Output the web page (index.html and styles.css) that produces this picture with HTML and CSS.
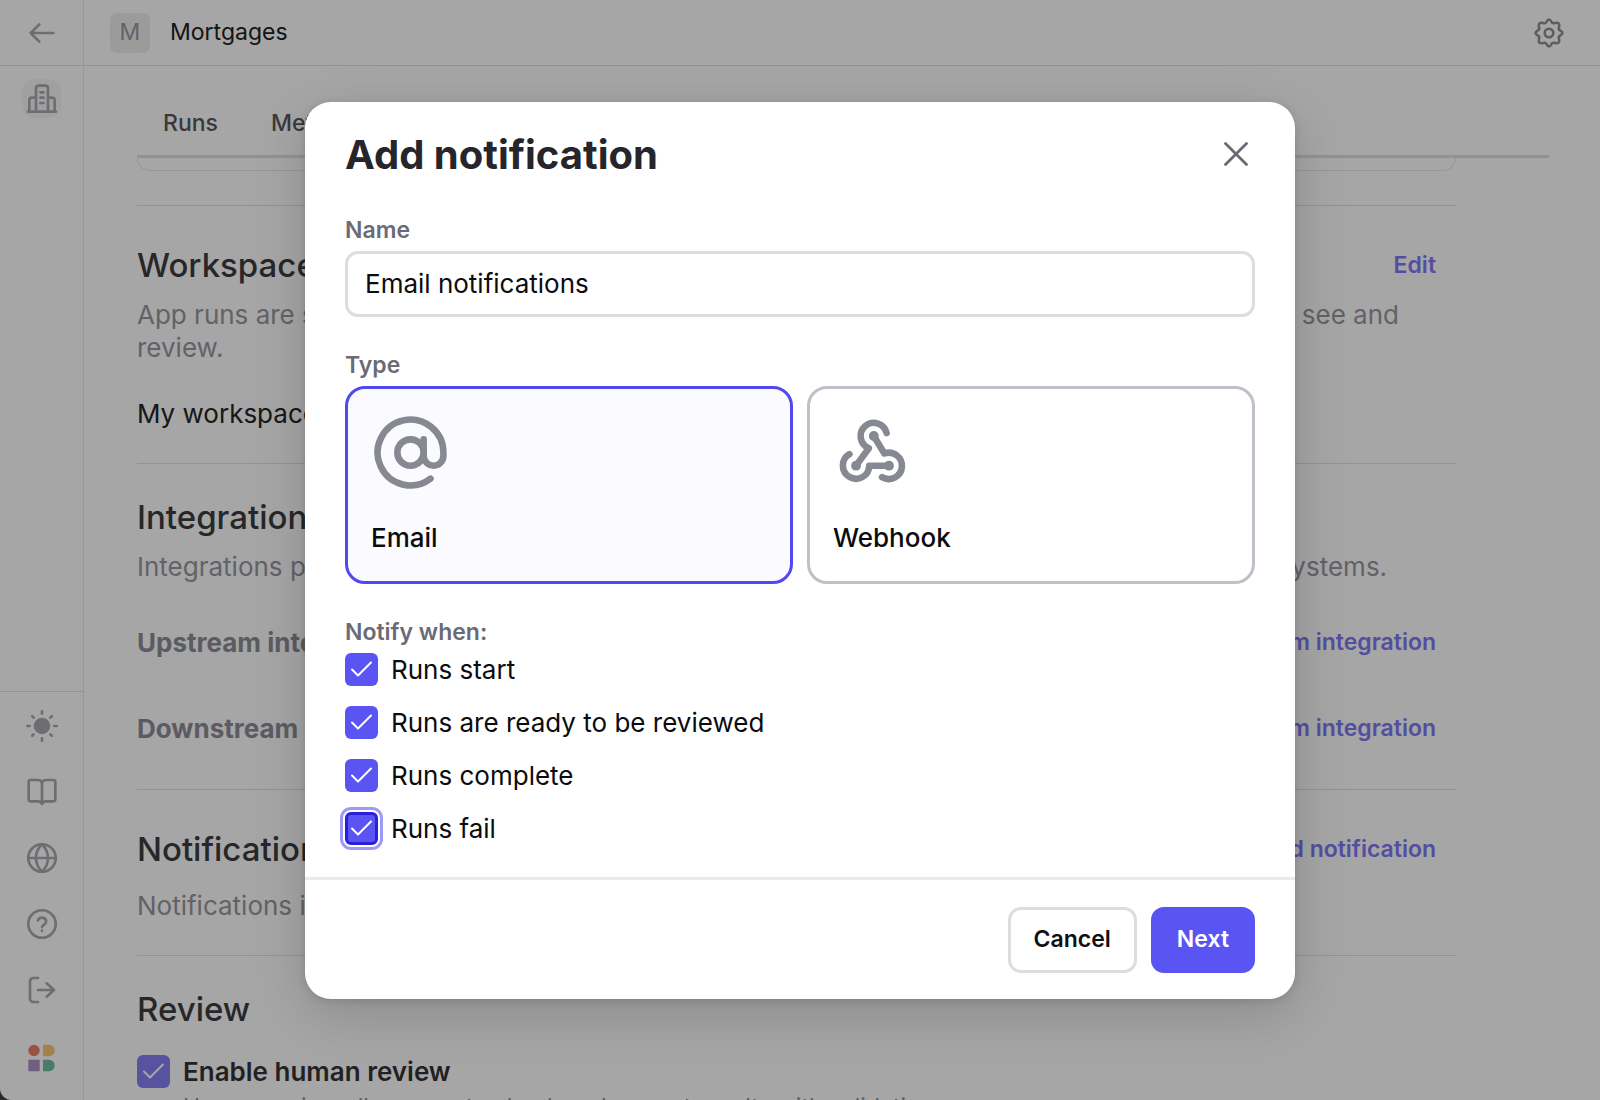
FILE: index.html
```html
<!DOCTYPE html>
<html lang="en">
<head>
  <meta charset="UTF-8" />
  <meta name="viewport" content="width=device-width, initial-scale=1.0" />
  <title>Mortgages - Add notification</title>
  <link rel="stylesheet" href="styles.css">
</head>
<body>
  <div class="app">
    <aside class="sidebar">
      <a href="#" class="back" aria-label="Back">
        <svg class="icon" viewBox="0 0 24 24"><path d="M20.500 12H3.500M10 5.500L3.500 12L10 18.500" /></svg>
      </a>
      <a href="#" class="side-tile" aria-label="Organization">
        <svg class="icon" viewBox="0 0 24 24"><path d="M1.500 21.500h21M7.500 21.500V4a2 2 0 0 1 2-2h5a2 2 0 0 1 2 2v17.500M7.500 11H4.500a2 2 0 0 0-2 2v8.500M16.500 11h3a2 2 0 0 1 2 2v8.500M10.800 7h2.400M10.800 11h2.400M10.800 15h2.400" /></svg>
      </a>
      <nav class="side-bottom">
        <a href="#" aria-label="Theme">
          <svg class="icon" viewBox="0 0 24 24"><circle class="solid" cx="12" cy="12" r="5.200" /><path d="M12 1v1.800M12 21.200v1.800M1 12h1.800M21.200 12h1.800M4.700 4.700l1 1M18.300 18.300l1 1M4.700 19.300l1-1M18.300 5.700l1-1" /></svg>
        </a>
        <a href="#" aria-label="Docs">
          <svg class="icon" viewBox="0 0 24 24"><path d="M12 5.500a3 3 0 0 0-3-2.500H3.500A1.500 1.500 0 0 0 2 4.500v13A1.500 1.500 0 0 0 3.500 19H9q2 0 3 2q1-2 3-2h5.500a1.500 1.500 0 0 0 1.500-1.500v-13A1.500 1.500 0 0 0 20.500 3H15a3 3 0 0 0-3 2.500V20.500" /></svg>
        </a>
        <a href="#" aria-label="Language">
          <svg class="icon" viewBox="0 0 24 24"><circle cx="12" cy="12" r="10.300" /><path d="M1.700 12h20.600M12 1.700c-6 6-6 14.600 0 20.600c6-6 6-14.600 0-20.600" /></svg>
        </a>
        <a href="#" aria-label="Help">
          <svg class="icon" viewBox="0 0 24 24"><circle cx="12" cy="12" r="10.300" /><path d="M8.900 9.300a3.200 3.200 0 0 1 6.200 1c0 2.100-3.100 2.500-3.100 4M12 17v.1" /></svg>
        </a>
        <a href="#" aria-label="Log out">
          <svg class="icon" viewBox="0 0 24 24"><path d="M9 3H5.500a2.500 2.500 0 0 0-2.500 2.500v13a2.500 2.500 0 0 0 2.500 2.500h3.500M9 12h12M15.500 7l5.500 5l-5.500 5" /></svg>
        </a>
        <a href="#" aria-label="Home">
          <svg class="logo" viewBox="0 0 27 27"><circle cx="6" cy="6" r="5.700" fill="#ea8069" /><path d="M15 .3h6a5.700 5.700 0 0 1 0 11.400h-6z" fill="#fac871" /><path d="M.3 15.300h11.400v11.400H.3z" fill="#ac92c6" /><path d="M15 15.300h6a5.700 5.700 0 0 1 0 11.400h-6z" fill="#73bd9f" /></svg>
        </a>
      </nav>
    </aside>

    <div class="page">
      <header class="topbar">
        <span class="avatar">M</span>
        <span class="app-name">Mortgages</span>
        <button class="settings" aria-label="Settings">
          <svg viewBox="0 0 30 30"><circle cx="15" cy="15" r="4.300" /><path d="M12.600 3.600Q15 -.5 17.400 3.600Q18.200 6 21.300 4.900Q25.900 4.100 25.100 8.700Q24 11.800 26.400 12.600Q30.500 15 26.400 17.400Q24 18.200 25.100 21.300Q25.900 25.900 21.300 25.100Q18.200 24 17.400 26.400Q15 30.500 12.600 26.400Q11.800 24 8.700 25.100Q4.100 25.900 4.900 21.300Q6 18.200 3.600 17.400Q-.5 15 3.600 12.600Q6 11.800 4.900 8.700Q4.100 4.100 8.700 4.900Q11.800 6 12.600 3.600Z" /></svg>
        </button>
      </header>

      <main class="main">
        <nav class="tabs">
          <a href="#">Runs</a>
          <a href="#">Metrics</a>
        </nav>
        <div class="content">
          <div class="card-end"></div>
          <section class="workspace">
            <div class="row">
              <h2>Workspace</h2>
              <a href="#">Edit</a>
            </div>
            <p class="desc">App runs are saved to a workspace. Anyone who is a member of the workspace will be able to see and review.</p>
            <p class="value">My workspace</p>
          </section>
          <section class="integrations">
            <h2>Integrations</h2>
            <p class="desc">Integrations pull files from upstream systems and push the results to your other downstream systems.</p>
            <div class="row">
              <h3>Upstream integration</h3>
              <a href="#">Add upstream integration</a>
            </div>
            <div class="row">
              <h3>Downstream integration</h3>
              <a href="#">Add downstream integration</a>
            </div>
          </section>
          <section class="notifications">
            <div class="row">
              <h2>Notifications</h2>
              <a href="#">Add notification</a>
            </div>
            <p class="desc">Notifications inform you about runs.</p>
          </section>
          <section class="review">
            <h2>Review</h2>
            <label class="check strong"><input type="checkbox" checked />Enable human review</label>
            <p class="hint">Human review allows you to check and correct results with validation</p>
          </section>
        </div>
      </main>
    </div>

    <div class="overlay">
      <form class="modal" role="dialog" aria-labelledby="modalTitle">
        <div class="modal-body">
          <div class="modal-head">
            <h1 id="modalTitle">Add notification</h1>
            <button type="button" class="close" aria-label="Close">
              <svg viewBox="0 0 24 24"><path d="M1.500 1.500l21 21M22.500 1.500l-21 21" /></svg>
            </button>
          </div>

          <label class="label" for="name">Name</label>
          <input class="text-input" id="name" type="text" value="Email notifications" />

          <div class="label" id="typeLabel">Type</div>
          <div class="types" role="group" aria-labelledby="typeLabel">
            <button type="button" class="type selected">
              <svg viewBox="0 0 24 24"><circle cx="12" cy="12" r="4" /><path d="M16 8v5a3 3 0 0 0 6 0v-1a10 10 0 1 0-3.920 7.940" /></svg>
              Email
            </button>
            <button type="button" class="type">
              <svg viewBox="0 0 24 24"><g class="nodes"><circle cx="12.400" cy="7" r="1.500" /><circle cx="7" cy="16" r="1.500" /><circle cx="17" cy="16" r="1.500" /></g><path d="M16.300 6.100a4 4 0 1 0-5.400 4.600L7 16M12.400 7l3.200 5.300a4 4 0 1 1-.7 7.200M5 12.500a4 4 0 1 0 6 3.500h6" /></svg>
              Webhook
            </button>
          </div>

          <div class="label" id="notifyLabel">Notify when:</div>
          <div class="checks" role="group" aria-labelledby="notifyLabel">
            <label class="check"><input type="checkbox" checked />Runs start</label>
            <label class="check"><input type="checkbox" checked />Runs are ready to be reviewed</label>
            <label class="check"><input type="checkbox" checked />Runs complete</label>
            <label class="check"><input type="checkbox" class="active" checked />Runs fail</label>
          </div>
        </div>
        <div class="modal-foot">
          <button type="button" class="btn">Cancel</button>
          <button type="button" class="btn primary">Next</button>
        </div>
      </form>
    </div>
  </div>
</body>
</html>
```
FILE: styles.css
```css
* {
  margin: 0; padding: 0; box-sizing: border-box;
}
body {
  background: #2a2a2a; color: #3d3d3f;
  font-family: Inter, sans-serif; font-size: 26px; line-height: 33px;
}
button, input {
  font: inherit;
}
button {
  background: none; border: none; cursor: pointer;
}
a {
  color: #8079f5; text-decoration: none;
}
svg {
  display: block; fill: none; stroke: currentColor;
  stroke-linecap: round; stroke-linejoin: round;
}
.app {
  display: flex; position: relative;
  height: 100vh; overflow: hidden;
  background: #fff; border-bottom-left-radius: 12px;
}

/* sidebar */
.sidebar {
  width: 84px; flex-shrink: 0;
  display: flex; flex-direction: column; align-items: center;
  border-right: 1px solid #e8e8e9;
}
.sidebar a {
  color: #a9aab0;
}
.icon {
  width: 32px; height: 32px; stroke-width: 2;
}
.icon .solid {
  fill: currentColor;
}
.back {
  align-self: stretch; height: 66px;
  display: flex; align-items: center; justify-content: center;
  border-bottom: 1px solid #e1e1e2;
}
.side-tile {
  width: 39px; height: 39px; margin-top: 13px;
  display: flex; align-items: center; justify-content: center;
  background: #f6f6f7; border-radius: 13px;
}
.side-bottom {
  align-self: stretch; margin-top: auto;
  display: flex; flex-direction: column; align-items: center;
  gap: 34px; padding: 18px 0 24px;
  border-top: 1px solid #e1e1e2;
}
.logo {
  width: 27px; height: 36px; stroke: none;
}

/* top bar */
.page {
  flex: 1; min-width: 0;
  display: flex; flex-direction: column;
}
.topbar {
  height: 66px; flex-shrink: 0;
  display: flex; align-items: center; gap: 20px;
  padding: 0 36px 0 26px;
  border-bottom: 1px solid #e1e1e2;
  font-size: 23px; color: #212122;
}
.avatar {
  width: 40px; height: 40px;
  display: flex; align-items: center; justify-content: center;
  background: #efeff0; border-radius: 7px; color: #97989f;
}
.settings {
  margin-left: auto; color: #8f9097;
}
.settings svg {
  width: 30px; height: 30px; stroke-width: 2.6;
}

/* page content */
.main {
  padding: 26px 51px 0 53px;
}
.tabs {
  display: flex; height: 66px; padding: 0 26px; gap: 53px;
  align-items: center;
  border-bottom: 3px solid #e1e1e2;
  font-size: 23px; font-weight: 500;
}
.tabs a {
  color: #58585b;
}
.content {
  max-width: 1319px;
}
.card-end {
  height: 13px; margin-bottom: 34px;
  border: 1px solid #e8e8e9; border-top: none;
  border-radius: 0 0 13px 13px;
}
section {
  border-top: 1px solid #e1e1e2;
}
section h2 {
  font-size: 33px; font-weight: 500; line-height: 40px;
}
section h3 {
  font-size: 26px; font-weight: 700; color: #8d8d97;
}
.row {
  display: flex; justify-content: space-between; align-items: center;
}
.row a {
  padding-right: 20px;
  font-size: 23px; font-weight: 600;
}
.desc {
  color: #97979f;
}
.value {
  color: #252526;
}
.workspace {
  padding: 39px 0 33px;
}
.workspace .desc {
  margin: 13px 0 33px;
}
.integrations {
  padding: 33px 0 44px;
}
.integrations .desc {
  margin: 13px 0 43px;
}
.integrations .row + .row {
  margin-top: 53px;
}
.notifications {
  padding: 39px 0 33px;
}
.notifications .desc {
  margin-top: 20px;
}
.review {
  padding: 33px 0 0;
}
.review .check {
  margin-top: 26px;
}
.hint {
  margin-top: 3px; padding-left: 46px;
  font-size: 23px; color: #8f9097;
}

/* checkboxes */
.check {
  display: flex; align-items: center; gap: 13px;
  color: #0c0c0e;
}
.check input {
  width: 33px; height: 33px; flex-shrink: 0;
  appearance: none; border-radius: 6px;
  background: #5a54f2 url("data:image/svg+xml,%3Csvg xmlns='http://www.w3.org/2000/svg' viewBox='0 0 33 33' fill='none' stroke='white' stroke-width='2' stroke-linecap='round' stroke-linejoin='round'%3E%3Cpath d='M7 16.500l6 6l13-13'/%3E%3C/svg%3E");
}
.check input.active {
  border: 3px solid #2a1fdb;
  background-origin: border-box;
  box-shadow: 0 0 0 2px #fff, 0 0 0 5px #9c99f7;
}
.check.strong {
  font-weight: 600; color: #343436;
}
.check.strong input {
  background-color: #8780f6;
}

/* modal */
.overlay {
  position: absolute; inset: 0;
  display: flex; align-items: center; justify-content: center;
  background: rgba(0, 0, 0, 0.35);
}
.modal {
  width: 100%; max-width: 990px;
  background: #fff; border-radius: 26px;
  box-shadow: 0 16px 56px rgba(0, 0, 0, 0.16), 0 2px 8px rgba(0, 0, 0, 0.12);
}
.modal-body {
  padding: 26px 40px 32px;
}
.modal-head {
  display: flex; justify-content: space-between; align-items: center;
  margin-bottom: 33px; padding-right: 7px;
}
.modal-head h1 {
  font-size: 40px; line-height: 53px; font-weight: 700; color: #26252b;
}
.close {
  color: #686974;
}
.close svg {
  width: 24px; height: 24px; stroke-width: 2.8;
}
.label {
  display: block; margin-bottom: 4px;
  font-size: 23px; font-weight: 600; line-height: 33px; color: #6a6b76;
}
.text-input {
  display: block; width: 100%; height: 66px;
  margin-bottom: 32px; padding: 0 17px;
  border: 3px solid #dcdce1; border-radius: 13px;
  background: #fff; color: #0c0c0e;
}
.types {
  display: grid; grid-template-columns: 1fr 1fr; gap: 14px;
  margin-bottom: 32px;
}
.type {
  padding: 24px 23px 27px; text-align: left;
  border: 3px solid #c0c0c9; border-radius: 20px;
  color: #0c0c0e; font-weight: 500;
}
.type.selected {
  border-color: #5049f1; background: #fbfaff;
}
.type svg {
  width: 79px; height: 79px; margin-bottom: 29px;
  color: #878992; stroke-width: 2;
}
.nodes {
  fill: currentColor; stroke: none;
}
.checks {
  display: flex; flex-direction: column; gap: 20px;
}
.modal-foot {
  display: flex; justify-content: flex-end; gap: 14px;
  padding: 27px 40px 26px;
  border-top: 3px solid #eaeaeb;
}
.btn {
  height: 66px; padding: 0 23px;
  border: 3px solid #dcdce1; border-radius: 13px;
  font-size: 23px; font-weight: 600; color: #0f0f14;
}
.btn.primary {
  border-color: #5a54f2; background: #5a54f2; color: #fff;
}
```
